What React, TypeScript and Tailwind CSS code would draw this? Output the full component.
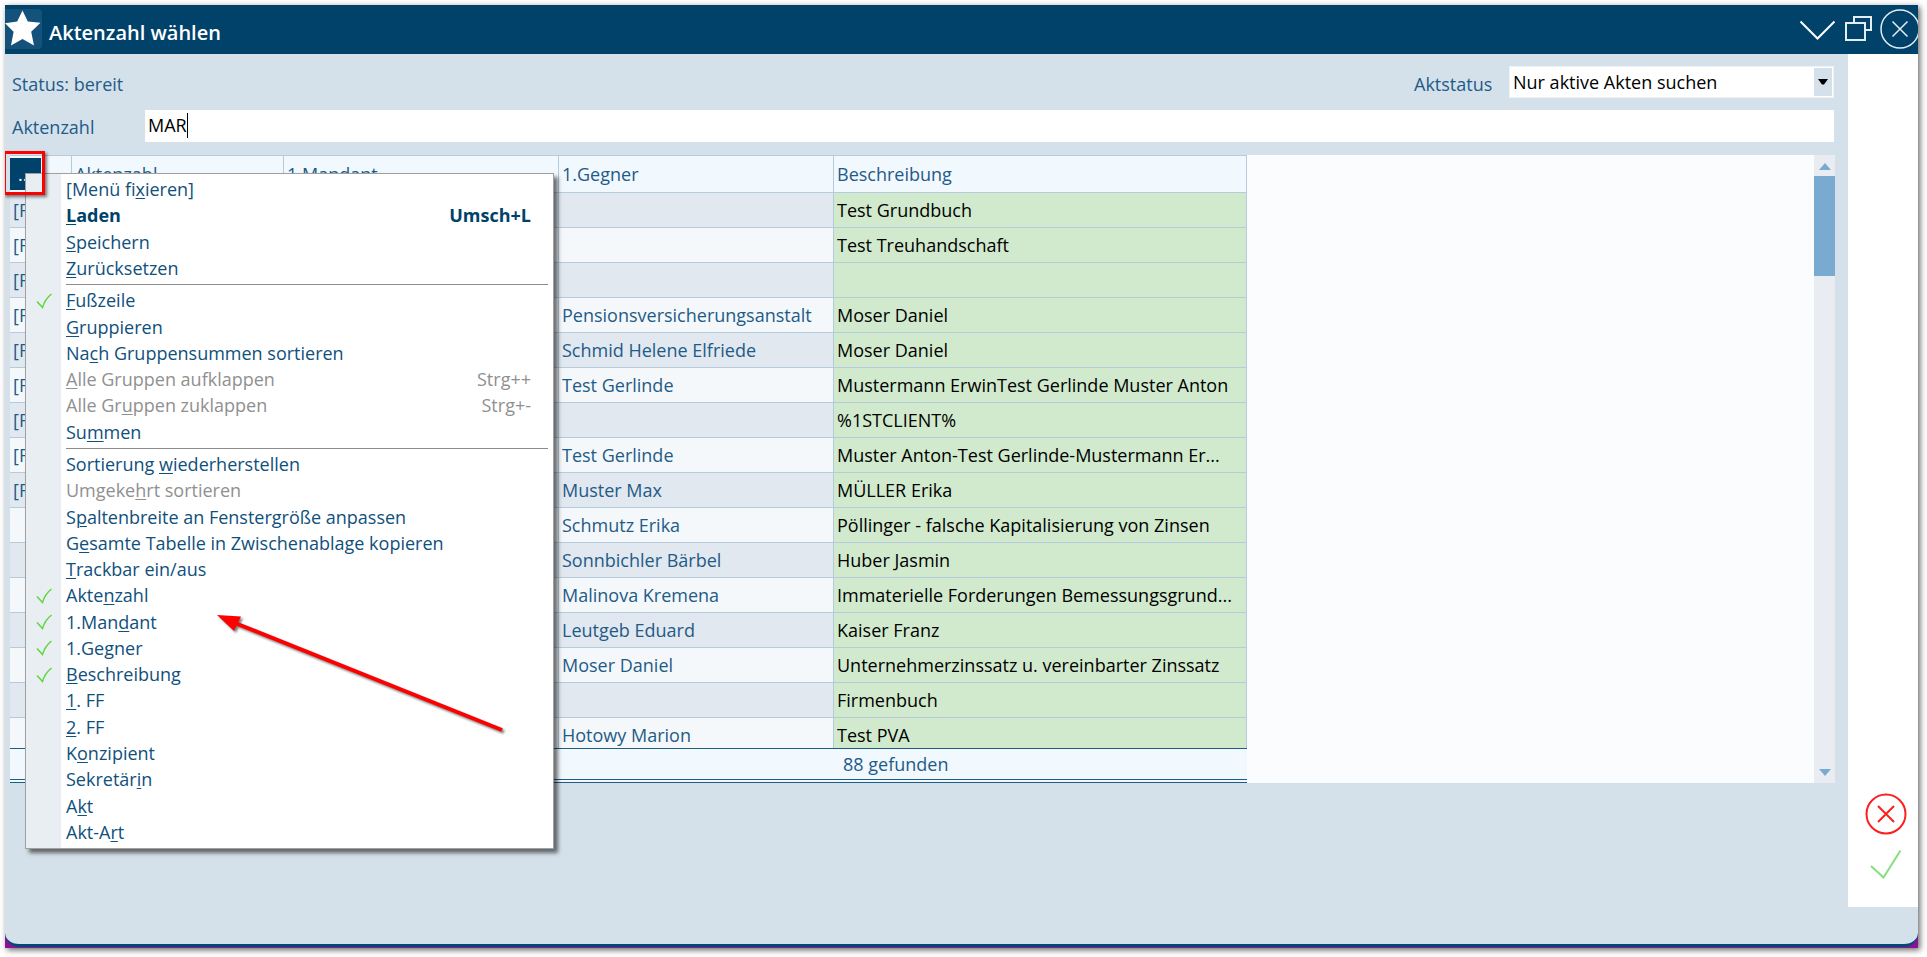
import { useState } from "react";
import { clsx } from "clsx";

type MenuEntry = {
  label: string; // "&" marks the mnemonic letter
  shortcut?: string;
  checked?: boolean;
  disabled?: boolean;
  bold?: boolean;
};

const menuGroups: MenuEntry[][] = [
  [
    { label: "[Menü fi&xieren]" },
    { label: "&Laden", shortcut: "Umsch+L", bold: true },
    { label: "&Speichern" },
    { label: "&Zurücksetzen" },
  ],
  [
    { label: "&Fußzeile", checked: true },
    { label: "&Gruppieren" },
    { label: "Na&ch Gruppensummen sortieren" },
    { label: "&Alle Gruppen aufklappen", shortcut: "Strg++", disabled: true },
    { label: "Alle Gr&uppen zuklappen", shortcut: "Strg+-", disabled: true },
    { label: "Su&mmen" },
  ],
  [
    { label: "Sortierung &wiederherstellen" },
    { label: "Umgeke&hrt sortieren", disabled: true },
    { label: "S&paltenbreite an Fenstergröße anpassen" },
    { label: "G&esamte Tabelle in Zwischenablage kopieren" },
    { label: "&Trackbar ein/aus" },
    { label: "Akte&nzahl", checked: true },
    { label: "1.Man&dant", checked: true },
    { label: "1.Ge&gner", checked: true },
    { label: "&Beschreibung", checked: true },
    { label: "&1. FF" },
    { label: "&2. FF" },
    { label: "K&onzipient" },
    { label: "Sekretär&in" },
    { label: "A&kt" },
    { label: "Akt-A&rt" },
  ],
];

const rows = [
  { flag: "[F", gegner: "", beschreibung: "Test Grundbuch" },
  { flag: "[F", gegner: "", beschreibung: "Test Treuhandschaft" },
  { flag: "[F", gegner: "", beschreibung: "" },
  { flag: "[F", gegner: "Pensionsversicherungsanstalt", beschreibung: "Moser Daniel" },
  { flag: "[F", gegner: "Schmid Helene Elfriede", beschreibung: "Moser Daniel" },
  { flag: "[F", gegner: "Test Gerlinde", beschreibung: "Mustermann ErwinTest Gerlinde Muster Anton" },
  { flag: "[F", gegner: "", beschreibung: "%1STCLIENT%" },
  { flag: "[F", gegner: "Test Gerlinde", beschreibung: "Muster Anton-Test Gerlinde-Mustermann Er..." },
  { flag: "[F", gegner: "Muster Max", beschreibung: "MÜLLER Erika" },
  { flag: "", gegner: "Schmutz Erika", beschreibung: "Pöllinger - falsche Kapitalisierung von Zinsen" },
  { flag: "", gegner: "Sonnbichler Bärbel", beschreibung: "Huber Jasmin" },
  { flag: "", gegner: "Malinova Kremena", beschreibung: "Immaterielle Forderungen Bemessungsgrund..." },
  { flag: "", gegner: "Leutgeb Eduard", beschreibung: "Kaiser Franz" },
  { flag: "", gegner: "Moser Daniel", beschreibung: "Unternehmerzinssatz u. vereinbarter Zinssatz" },
  { flag: "", gegner: "", beschreibung: "Firmenbuch" },
  { flag: "", gegner: "Hotowy Marion", beschreibung: "Test PVA" },
];

function MenuLabel({ text }: { text: string }) {
  const i = text.indexOf("&");
  return (
    <span>
      {text.slice(0, i)}
      <span className="underline decoration-1 underline-offset-2">{text[i + 1]}</span>
      {text.slice(i + 2)}
    </span>
  );
}

function TitleBar() {
  return (
    <header className="flex h-[49px] shrink-0 items-start bg-[#00426a] pt-1">
      <span className="flex h-10 w-[37px] items-start rounded-r bg-[#14527b]">
        <svg viewBox="0 0 37 40" className="h-10 w-[37px]" fill="#fff">
          <path d="M17.5 1.5 22.8 12.5 35.5 13.8 26.2 22.8 29 36.5 17.5 30 6 36.5 8.6 22.8 0 14.2 12.2 12.5z" />
        </svg>
      </span>
      <h1 className="pt-2.5 pl-[7px] text-xl leading-7 font-semibold text-white">Aktenzahl wählen</h1>
      <div className="ml-auto flex h-10 items-center text-[#e3edf4]">
        <button type="button" aria-label="Minimieren" className="mr-2">
          <svg viewBox="0 0 37 40" className="h-10 w-[37px]" fill="none" stroke="#fff" strokeWidth="2">
            <path d="M1.5 12.5 18.5 29.5 35.5 12.5" />
          </svg>
        </button>
        <button type="button" aria-label="Wiederherstellen" className="mr-2">
          <svg viewBox="0 0 28 40" className="h-10 w-7" fill="none" stroke="currentColor" strokeWidth="2">
            <path d="M2 14h19v17H2zM10 14V8h17v13h-6" />
          </svg>
        </button>
        <button type="button" aria-label="Schließen">
          <svg viewBox="0 0 38 40" className="h-10 w-[38px]" fill="none" stroke="currentColor" strokeWidth="1.5">
            <circle cx="20" cy="20" r="19" />
            <path d="M12.5 12.5 27.5 27.5M27.5 12.5 12.5 27.5" />
          </svg>
        </button>
      </div>
    </header>
  );
}

function SearchForm() {
  const [value, setValue] = useState("MAR");
  return (
    <form className="pr-px pl-0.5" onSubmit={(e) => e.preventDefault()}>
      <div className="flex h-8 items-center">
        <span className="pt-1">Status: bereit</span>
        <label htmlFor="aktstatus" className="ml-auto w-[95px] pt-1">
          Aktstatus
        </label>
        <div className="relative h-8 w-[325px] border border-[#eef3f7] bg-white">
          <select id="aktstatus" className="h-full w-full appearance-none bg-transparent pl-[3px] text-black outline-none">
            <option>Nur aktive Akten suchen</option>
          </select>
          <span className="pointer-events-none absolute inset-y-px right-px flex w-[18px] items-center justify-center bg-[#d5e1ea]">
            <svg viewBox="0 0 10 6" className="h-1.5 w-2.5" fill="#000">
              <path d="M0 0h10L6 5.5H4z" />
            </svg>
          </span>
        </div>
      </div>
      <div className="mt-3 flex h-8 items-center">
        <label htmlFor="aktenzahl" className="w-[133px] pt-0.5">
          Aktenzahl
        </label>
        <div className="flex h-8 flex-1 items-center bg-white pb-0.5 pl-[3px]">
          <input
            id="aktenzahl"
            value={value}
            onChange={(e) => setValue(e.target.value)}
            className="field-sizing-content bg-transparent text-black outline-none"
          />
          <span className="h-[25px] w-px bg-black" />
        </div>
      </div>
    </form>
  );
}

function ResultTable() {
  return (
    <table className="w-[1237px] table-fixed border-separate border-spacing-0">
      <colgroup>
        <col className="w-[62px]" />
        <col className="w-[212px]" />
        <col className="w-[275px]" />
        <col className="w-[275px]" />
        <col className="w-[413px]" />
      </colgroup>
      <thead>
        <tr className="h-[38px] bg-[#f1f8fe] text-left [&>th]:border-y [&>th]:border-r [&>th]:border-[#b5cadb] [&>th]:font-normal">
          <th className="p-0">
            <button type="button" className="my-0.5 block h-8 w-[31px] bg-[#00426a] pl-2 text-left text-white">
              ...
            </button>
          </th>
          <th className="pl-[3px]">Aktenzahl</th>
          <th className="pl-[3px]">1.Mandant</th>
          <th className="pl-[3px]">1.Gegner</th>
          <th className="pl-[3px]">Beschreibung</th>
        </tr>
      </thead>
      <tbody>
        {rows.map((row, i) => {
          const last = i === rows.length - 1;
          // the footer cuts off the lower edge of the last row
          const cell = clsx("overflow-hidden whitespace-nowrap", last ? "h-[30px]" : "h-[34px]");
          return (
            <tr
              key={i}
              className={clsx(
                "align-top leading-[34px] [&>td]:border-r [&>td]:border-[#b5cadb] [&>td]:py-0 [&>td]:pr-0 [&>td]:pl-[3px]",
                i % 2 ? "bg-[#f4f8fb]" : "bg-[#e1e8ef]",
                !last && "[&>td]:border-b"
              )}
            >
              <td>
                <div className={cell}>{row.flag}</div>
              </td>
              <td />
              <td />
              <td>
                <div className={cell}>{row.gegner}</div>
              </td>
              <td className="bg-[#d1eacd] text-black">
                <div className={cell}>{row.beschreibung}</div>
              </td>
            </tr>
          );
        })}
      </tbody>
      <tfoot>
        <tr className="bg-[#f1f8fe] leading-[30px] [&>td]:border-t [&>td]:border-b-4 [&>td]:border-t-[#1d5c83] [&>td]:border-b-[#1d5c83] [&>td]:[border-bottom-style:double]">
          <td colSpan={4} className="p-0" />
          <td className="py-0 pl-[9px]">88 gefunden</td>
        </tr>
      </tfoot>
    </table>
  );
}

function ScrollBar() {
  return (
    <div className="flex w-[21px] flex-col items-center bg-[#e9edf2]">
      <svg viewBox="0 0 12 7" className="mt-2 mb-1.5 h-[7px] w-3" fill="#79abd1">
        <path d="M6 0 12 7H0z" />
      </svg>
      <div className="h-[100px] w-full bg-[#79abd1]" />
      <svg viewBox="0 0 12 7" className="mt-auto mb-[7px] h-[7px] w-3" fill="#79abd1">
        <path d="M6 7 12 0H0z" />
      </svg>
    </div>
  );
}

function ContextMenu() {
  return (
    <div
      role="menu"
      className="absolute top-[18px] left-[15px] z-10 flex h-[676px] w-[529px] flex-col border border-[#a0a0a0] bg-[linear-gradient(to_right,#e9eef3_35px,#fff_35px)] pt-0.5 pb-[3px] text-[#10507c] shadow-[4px_4px_4px_rgba(0,0,0,0.55)]"
    >
      {menuGroups.map((group, g) => (
        <div key={g} className="contents">
          {g > 0 && <div role="separator" className="mt-[3px] mr-[5px] mb-0.5 ml-10 h-px bg-[#8c8c8c]" />}
          {group.map((item) => (
            <button
              key={item.label}
              type="button"
              role="menuitem"
              disabled={item.disabled}
              className={clsx(
                "flex flex-1 items-center pr-[22px] text-left leading-[26px]",
                item.bold && "font-bold text-[#00426a]",
                item.disabled && "text-[#909090]"
              )}
            >
              <span className="flex w-10 justify-start pl-2.5">
                {item.checked && (
                  <svg viewBox="0 0 17 17" className="h-[17px] w-[17px]" fill="none" stroke="#5fd63f" strokeWidth="1.5">
                    <path d="M1 9.5 6.5 15.500Q9 7 15.5 2" />
                  </svg>
                )}
              </span>
              <MenuLabel text={item.label} />
              {item.shortcut && <span className="ml-auto">{item.shortcut}</span>}
            </button>
          ))}
        </div>
      ))}
    </div>
  );
}

// Red frame and arrow that point at the column menu
function Annotations() {
  return (
    <>
      <div className="pointer-events-none absolute -top-1 -left-[7px] z-20 h-11 w-[42px] border-3 border-[#fe0000] shadow-[2px_2px_3px_rgba(0,0,0,0.5)]" />
      <svg
        viewBox="0 0 292 122"
        className="pointer-events-none absolute top-[458px] left-[205px] z-20 h-[122px] w-[292px] drop-shadow-[2px_2px_1px_rgba(0,0,0,0.5)]"
      >
        <path d="M20 10 287 117" stroke="#fe0000" strokeWidth="4" />
        <path d="M2 2 26 3.5 19 18z" fill="#fe0000" />
      </svg>
    </>
  );
}

export default function App() {
  return (
    <div className="flex min-h-screen bg-white pt-[5px] pr-[9px] pb-[9px] pl-[5px] font-['Open_Sans','Noto_Sans',sans-serif] text-lg leading-6 text-[#1f5b87]">
      <div className="flex flex-1 flex-col bg-[#8a1294] shadow-[2px_2px_6px_rgba(0,0,0,0.6)]">
        <div className="mb-px flex flex-1 flex-col overflow-hidden rounded-b-[14px] border-b-3 border-[#004a73] bg-[#d5e1ea]">
          <TitleBar />
          <div className="flex flex-1">
            <main className="flex-1 pt-3 pr-[13px] pl-[5px]">
              <SearchForm />
              <div className="relative mt-[13px] flex bg-[#fbfcfe]">
                <ResultTable />
                <div className="flex-1" />
                <ScrollBar />
                <ContextMenu />
                <Annotations />
              </div>
            </main>
            <aside className="mb-[37px] flex w-[70px] flex-col items-center justify-end bg-white pb-7 pl-1.5">
              <button type="button" aria-label="Abbrechen">
                <svg viewBox="0 0 42 42" className="h-[42px] w-[42px]" fill="none" stroke="#fb2020" strokeWidth="2">
                  <circle cx="21" cy="21" r="19.5" />
                  <path d="M13 13 29 29M29 13 13 29" />
                </svg>
              </button>
              <button type="button" aria-label="Übernehmen" className="mt-3.5">
                <svg viewBox="0 0 32 30" className="h-[30px] w-8" fill="none" stroke="#84e07c" strokeWidth="2">
                  <path d="M1 17 13.5 28.5 30.5 1.5" />
                </svg>
              </button>
            </aside>
          </div>
        </div>
      </div>
    </div>
  );
}
